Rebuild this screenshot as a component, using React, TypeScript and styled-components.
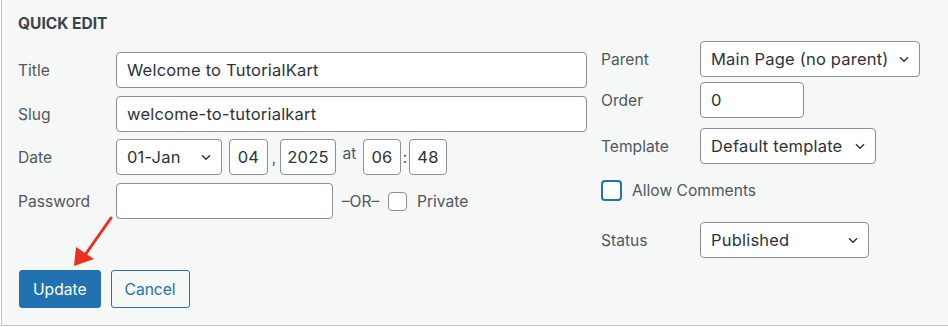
import React from 'react';
import styled, { createGlobalStyle } from 'styled-components';

const GlobalStyle = createGlobalStyle`
  html, body {
    margin: 0;
    padding: 0;
    background: #ffffff;
  }
  body {
    font-family: Inter, "Liberation Sans", sans-serif;
    color: #2c3338;
  }
`;

const chevron =
  "url(\"data:image/svg+xml;utf8,<svg xmlns='http://www.w3.org/2000/svg' width='20' height='20' viewBox='0 0 20 20'><path d='M5.5 8l4.5 4.5 4.5-4.5' fill='none' stroke='%232c3338' stroke-width='1.5'/></svg>\")";

const Panel = styled.div`
  position: relative;
  margin-left: 1px;
  width: 960px;
  height: 326px;
  box-sizing: border-box;
  background: #f6f7f7;
  border-left: 1px solid #c3c4c7;
  border-bottom: 1px solid #c3c4c7;
  padding: 12px 0 0 16px;
  display: flex;
  flex-direction: column;
`;

const Columns = styled.div`
  display: flex;
  gap: 14px;
`;

const LeftCol = styled.div`
  width: 569px;
  display: flex;
  flex-direction: column;
`;

const RightCol = styled.div`
  padding-top: 29px;
  display: flex;
  flex-direction: column;
`;

const Heading = styled.h2`
  margin: 2px 0 18px;
  height: 20px;
  line-height: 20px;
  font-size: 15.5px;
  font-weight: 700;
  color: #3c434a;
`;

const Row = styled.div<{ $gap?: number }>`
  display: flex;
  align-items: center;
  height: 36px;
  margin-bottom: ${(p) => p.$gap ?? 8}px;
`;

const Label = styled.span<{ $w?: number }>`
  width: ${(p) => p.$w ?? 98}px;
  flex-shrink: 0;
  font-size: 15.6px;
  color: #50575e;
`;

const Input = styled.input<{ $w?: number; $center?: boolean }>`
  box-sizing: border-box;
  width: ${(p) => (p.$w ? `${p.$w}px` : '100%')};
  height: 36px;
  padding: ${(p) => (p.$center ? '0 2px' : '0 10px')};
  border: 1px solid #8c8f94;
  border-radius: 4px;
  background: #fff;
  font-family: Inter, "Liberation Sans", sans-serif;
  font-size: 16.5px;
  letter-spacing: 0.2px;
  color: #2c3338;
  text-align: ${(p) => (p.$center ? 'center' : 'left')};
  outline: none;
`;

const Select = styled.select<{ $w: number }>`
  box-sizing: border-box;
  width: ${(p) => p.$w}px;
  height: 36px;
  padding: 0 28px 0 10px;
  border: 1px solid #8c8f94;
  border-radius: 4px;
  background: #fff ${chevron} no-repeat right 6px top 50%;
  background-size: 18px 18px;
  appearance: none;
  -webkit-appearance: none;
  font-family: Inter, "Liberation Sans", sans-serif;
  font-size: 16.5px;
  letter-spacing: 0.2px;
  color: #2c3338;
  outline: none;
`;

const Sep = styled.span<{ $w: number; $raise?: number }>`
  width: ${(p) => p.$w}px;
  flex-shrink: 0;
  text-align: center;
  font-size: 15.6px;
  color: #50575e;
  position: relative;
  top: ${(p) => -(p.$raise ?? 0)}px;
`;

const Fields = styled.div`
  display: flex;
  align-items: center;
  flex: 1;
`;

const Check = styled.span<{ $focus?: boolean }>`
  box-sizing: border-box;
  width: ${(p) => (p.$focus ? 21 : 19)}px;
  height: ${(p) => (p.$focus ? 21 : 19)}px;
  flex-shrink: 0;
  background: #fff;
  border: ${(p) => (p.$focus ? '2px solid #2271b1' : '1px solid #8c8f94')};
  border-radius: 4px;
`;

const CheckText = styled.span`
  font-size: 15.6px;
  color: #50575e;
`;

const Buttons = styled.div`
  display: flex;
  gap: 10px;
  margin-top: 12px;
  margin-left: 1px;
`;

const Button = styled.button<{ $primary?: boolean }>`
  box-sizing: border-box;
  height: 38px;
  padding: 0 13px;
  border-radius: 3px;
  border: 1px solid #2271b1;
  background: ${(p) => (p.$primary ? '#2271b1' : '#f6f7f7')};
  color: ${(p) => (p.$primary ? '#fff' : '#2271b1')};
  font-family: Inter, "Liberation Sans", sans-serif;
  font-size: 15.6px;
  cursor: pointer;
`;

const Arrow = styled.svg`
  position: absolute;
  left: 61px;
  top: 212px;
`;

export default function App() {
  return (
    <>
      <GlobalStyle />
      <Panel>
        <Columns>
          <LeftCol>
            <Heading>QUICK EDIT</Heading>
            <Row>
              <Label>Title</Label>
              <Input defaultValue="Welcome to TutorialKart" />
            </Row>
            <Row $gap={7}>
              <Label>Slug</Label>
              <Input defaultValue="welcome-to-tutorialkart" />
            </Row>
            <Row $gap={8}>
              <Label>Date</Label>
              <Fields>
                <Select $w={106} defaultValue="01">
                  <option value="01">01-Jan</option>
                </Select>
                <Sep $w={7} />
                <Input $w={39} $center defaultValue="04" />
                <Sep $w={12}>,</Sep>
                <Input $w={56} $center defaultValue="2025" />
                <Sep $w={27} $raise={4}>at</Sep>
                <Input $w={38} $center defaultValue="06" />
                <Sep $w={8}>:</Sep>
                <Input $w={38} $center defaultValue="48" />
              </Fields>
            </Row>
            <Row $gap={0}>
              <Label>Password</Label>
              <Fields>
                <Input $w={217} />
                <Sep $w={55}>–OR–</Sep>
                <Check />
                <Sep $w={10} />
                <CheckText>Private</CheckText>
              </Fields>
            </Row>
          </LeftCol>
          <RightCol>
            <Row $gap={5}>
              <Label $w={99}>Parent</Label>
              <Select $w={220} defaultValue="0">
                <option value="0">Main Page (no parent)</option>
              </Select>
            </Row>
            <Row $gap={10}>
              <Label $w={99}>Order</Label>
              <Input $w={104} defaultValue="0" />
            </Row>
            <Row $gap={8}>
              <Label $w={99}>Template</Label>
              <Select $w={176} defaultValue="d">
                <option value="d">Default template</option>
              </Select>
            </Row>
            <Row $gap={14}>
              <Check $focus />
              <Sep $w={10} />
              <CheckText>Allow Comments</CheckText>
            </Row>
            <Row $gap={0}>
              <Label $w={99}>Status</Label>
              <Select $w={169} defaultValue="p">
                <option value="p">Published</option>
              </Select>
            </Row>
          </RightCol>
        </Columns>
        <Buttons>
          <Button $primary>Update</Button>
          <Button>Cancel</Button>
        </Buttons>
        <Arrow width="60" height="60" viewBox="0 0 60 60">
          <line x1="48" y1="6" x2="22" y2="43" stroke="#ee2f1c" strokeWidth="3" strokeLinecap="round" />
          <polygon points="11,54 13,35 31,47" fill="#ee2f1c" />
        </Arrow>
      </Panel>
    </>
  );
}
